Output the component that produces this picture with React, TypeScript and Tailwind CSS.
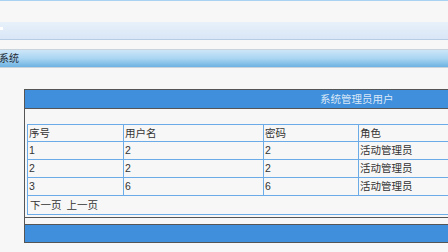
import React from "react";

const rows = [
  { id: "1", name: "2", pwd: "2", role: "活动管理员" },
  { id: "2", name: "2", pwd: "2", role: "活动管理员" },
  { id: "3", name: "6", pwd: "6", role: "活动管理员" },
];

export default function App() {
  const font = { fontFamily: '"Liberation Sans", "Noto Sans CJK SC", sans-serif' };
  return (
    <div className="w-[448px] h-[252px] overflow-hidden bg-[#f7f7f7] text-[#333]" style={font}>
      <div className="h-px bg-[#a9d1f2]" />
      <div className="h-[21px]" />
      <div className="h-[18px] bg-gradient-to-b from-[#e8f1fa] to-[#d9e6f6] border-b border-[#b6cce4] flex items-center">
        <div className="w-[3px] h-[3px] bg-white ml-0 mb-1" />
      </div>
      <div className="h-[9px]" />
      <div className="h-[19px] border-t border-[#c9d3dc] bg-gradient-to-b from-[#cde6f8] via-[#a9d5f2] to-[#6cb2e2] border-b border-[#b9d0e2] flex items-center">
        <span className="text-[10px] leading-none text-[#1e2a36] ml-[-1px]">系统</span>
      </div>
      <div className="h-[21px]" />
      <div className="ml-[24px] w-[440px] border-l border-[#555] flex flex-col">
        <div className="h-[20px] border-y border-[#555] bg-[#3f8fdc] flex items-center pl-[295px]">
          <span className="text-[10.5px] leading-none text-[#dbe8f7]">系统管理员用户</span>
        </div>
        <div className="pl-[2px] pt-[15px] pb-[2px] border-b border-[#555]">
          <table className="w-[440px] table-fixed border-collapse text-[10.5px] leading-none">
            <colgroup>
              <col className="w-[96px]" />
              <col className="w-[140px]" />
              <col className="w-[95px]" />
              <col />
            </colgroup>
            <tbody>
              <tr className="h-[17px]">
                <td className="border border-[#6aabe8] px-px text-left">序号</td>
                <td className="border border-[#6aabe8] px-px text-left">用户名</td>
                <td className="border border-[#6aabe8] px-px text-left">密码</td>
                <td className="border border-[#6aabe8] px-px text-left">角色</td>
              </tr>
              {rows.map((r) => (
                <tr key={r.id} className="h-[18px]">
                  <td className="border border-[#6aabe8] px-px">{r.id}</td>
                  <td className="border border-[#6aabe8] px-px">{r.name}</td>
                  <td className="border border-[#6aabe8] px-px">{r.pwd}</td>
                  <td className="border border-[#6aabe8] px-px">{r.role}</td>
                </tr>
              ))}
              <tr className="h-[19px]">
                <td colSpan={4} className="border border-[#6aabe8] px-[2px]">
                  <span>下一页</span>
                  <span className="ml-[5px]">上一页</span>
                </td>
              </tr>
            </tbody>
          </table>
        </div>
        <div className="h-[6px]" />
        <div className="h-[19px] border-y border-[#555] bg-[#3f8fdc]" />
      </div>
    </div>
  );
}
